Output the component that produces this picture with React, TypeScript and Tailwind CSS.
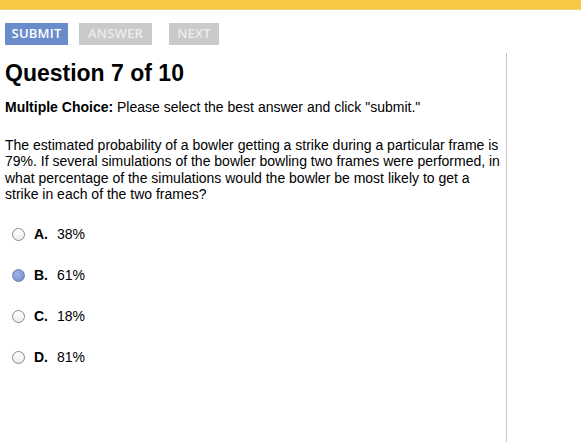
const options = [
  { letter: "A.", value: "38%" },
  { letter: "B.", value: "61%", selected: true },
  { letter: "C.", value: "18%" },
  { letter: "D.", value: "81%" },
];

const Radio = ({ selected }: { selected?: boolean }) => (
  <span
    className={`inline-block w-[13px] h-[13px] rounded-full border ${
      selected
        ? "border-[#6f7f9f] bg-[radial-gradient(circle_at_40%_35%,#9fb3e6,#6f8ad0)]"
        : "border-[#8a8a8a] bg-[linear-gradient(#ffffff,#ececec)]"
    }`}
  />
);

export default function App() {
  return (
    <div className="w-[581px] h-[442px] bg-white overflow-hidden font-['Liberation_Sans',Arial,sans-serif] text-black">
      <div className="h-[10px] bg-[#f6c843] border-b border-[#f0d47a]" />

      <div className="flex items-center gap-[11px] pl-[5px] pt-[13px] font-['Open_Sans',sans-serif] text-[13px] font-semibold tracking-[0.2px]">
        <button className="h-[22px] w-[63px] bg-[#6b8ccb] text-white">SUBMIT</button>
        <button className="h-[22px] w-[73px] bg-[#cacaca] text-[#ececec]">ANSWER</button>
        <button className="h-[22px] w-[50px] ml-[6px] bg-[#cacaca] text-[#ececec]">NEXT</button>
      </div>

      <div className="flex mt-[8px]">
        <div className="w-[507px] h-[400px] border-r border-[#c4c4c4] pl-[5px] pr-[5px]">
          <h1 className="text-[23px] leading-[26px] font-bold mt-[7px]">Question 7 of 10</h1>
          <p className="text-[14px] leading-[16px] mt-[13px]">
            <span className="font-bold">Multiple Choice:</span> Please select the best answer and click "submit."
          </p>
          <p className="text-[14px] leading-[16.33px] mt-[22px]">
            The estimated probability of a bowler getting a strike during a particular frame is 79%. If several
            simulations of the bowler bowling two frames were performed, in what percentage of the simulations would
            the bowler be most likely to get a strike in each of the two frames?
          </p>
          <div className="mt-[24px] flex flex-col gap-[25px] pl-[7px]">
            {options.map((o) => (
              <div key={o.letter} className="flex items-center h-[16px] text-[14px]">
                <Radio selected={o.selected} />
                <span className="font-bold ml-[9px] w-[23px]">{o.letter}</span>
                <span>{o.value}</span>
              </div>
            ))}
          </div>
        </div>
      </div>
    </div>
  );
}
